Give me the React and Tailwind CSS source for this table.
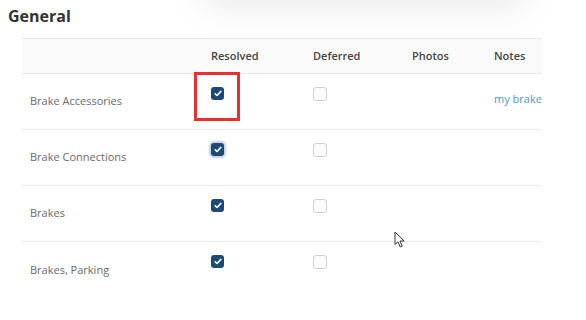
const rows = [
  { name: 'Brake Accessories', resolved: true, note: 'my brake' },
  { name: 'Brake Connections', resolved: true, focus: true },
  { name: 'Brakes', resolved: true },
  { name: 'Brakes, Parking', resolved: true },
];

function Checked({ focus }) {
  return (
    <span
      className={
        'flex h-[13px] w-[13px] items-center justify-center rounded-[3px] bg-[#1b4a78] ' +
        (focus ? 'shadow-[0_0_2px_2px_rgba(140,170,205,0.55)]' : '')
      }
    >
      <svg width="8" height="7" viewBox="0 0 8 7" fill="none">
        <path d="M1.2 3.8 L3.1 5.5 L6.8 1.4" stroke="white" strokeWidth="1.6" strokeLinecap="round" strokeLinejoin="round" />
      </svg>
    </span>
  );
}

function Unchecked() {
  return <span className="block h-[14px] w-[14px] rounded-[3px] border border-[#cfcfcf] bg-white" />;
}

export default function App() {
  return (
    <div className="relative h-[320px] w-[586px] overflow-hidden bg-white font-['Open_Sans',sans-serif]">
      {/* soft shadow of a popup above the visible area */}
      <div className="absolute left-[200px] top-[-34px] h-[44px] w-[330px] rounded-full bg-black/[0.07] blur-[16px]"></div>

      <h2 className="relative pl-[8px] pt-[4px] text-[16px] font-bold text-[#333]">General</h2>

      <div className="relative ml-[22px] mt-[10px] w-[520px] overflow-hidden">
        <div className="flex h-[36px] items-center border-y border-[#e8e8e8] bg-[#fafafa] text-[11px] font-semibold text-[#444]">
          <div className="w-[181px]"></div>
          <div className="w-[102px] pl-[8px]">Resolved</div>
          <div className="w-[99px] pl-[8px]">Deferred</div>
          <div className="w-[82px] pl-[8px]">Photos</div>
          <div className="flex-1 pl-[8px]">Notes</div>
        </div>

        {rows.map((r, i) => (
          <div
            key={r.name}
            className={'flex h-[56px] ' + (i < rows.length - 1 ? 'border-b border-[#ebebeb]' : '')}
          >
            <div className="flex w-[181px] items-center pl-[8px] text-[11px] text-[#6a6a6a]">{r.name}</div>
            <div className="w-[102px] pl-[8px] pt-[13px]">
              <Checked focus={r.focus} />
            </div>
            <div className="w-[99px] pl-[8px] pt-[13px]">
              <Unchecked />
            </div>
            <div className="w-[82px]"></div>
            <div className="flex flex-1 items-center whitespace-nowrap pb-[4px] pl-[8px] text-[11px] text-[#4a9bd1]">
              {r.note}
            </div>
          </div>
        ))}
      </div>

      {/* annotation box */}
      <div className="absolute left-[194px] top-[72px] h-[49px] w-[46px] border-[3px] border-[#e8312f]"></div>

      {/* mouse cursor */}
      <svg className="absolute left-[394px] top-[231px]" width="12" height="18" viewBox="0 0 12 18">
        <path d="M1 1 L1 13.5 L4 10.8 L6.2 16 L8.2 15.1 L6 10 L10.2 10 Z" fill="white" stroke="#333" strokeWidth="1" strokeLinejoin="round" />
      </svg>
    </div>
  );
}
